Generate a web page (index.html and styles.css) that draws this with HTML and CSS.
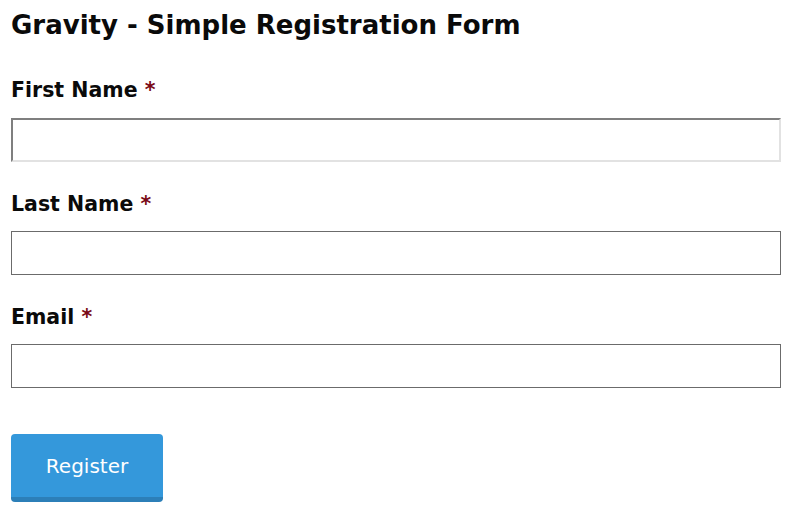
FILE: index.html
```html
<!DOCTYPE html>
<html lang="en">
<head>
<meta charset="utf-8">
<title>Gravity - Simple Registration Form</title>
<link rel="stylesheet" href="styles.css">
</head>
<body>
<main class="page">
  <h1 class="title">Gravity - Simple Registration Form</h1>
  <form class="form">
    <div class="field">
      <label class="label" for="first">First Name <span class="req">*</span></label>
      <input class="input input-inset" id="first" type="text">
    </div>
    <div class="field">
      <label class="label" for="last">Last Name <span class="req">*</span></label>
      <input class="input" id="last" type="text">
    </div>
    <div class="field field-last">
      <label class="label" for="email">Email <span class="req">*</span></label>
      <input class="input" id="email" type="text">
    </div>
    <div class="actions">
      <button class="button" type="button">Register</button>
    </div>
  </form>
</main>
</body>
</html>
```
FILE: styles.css
```css
html, body {
  margin: 0;
  padding: 0;
  background: #ffffff;
}
.page {
  padding: 9px 12px 0 11px;
  font-family: "DejaVu Sans", Verdana, sans-serif;
  color: #0a0a0a;
}
.title {
  margin: 0;
  font-size: 26px;
  line-height: 32px;
  font-weight: bold;
  color: #0a0a0a;
}
.form {
  display: flex;
  flex-direction: column;
  margin-top: 37px;
}
.field {
  display: flex;
  flex-direction: column;
  margin-bottom: 30px;
}
.field-last {
  margin-bottom: 46px;
}
.label {
  font-size: 20.5px;
  line-height: 24px;
  font-weight: bold;
  margin-bottom: 15px;
}
.req {
  color: #7a0a16;
}
.input {
  box-sizing: border-box;
  width: 100%;
  height: 44px;
  margin: 0;
  border: 1px solid #6b6b6b;
  background: #ffffff;
  padding: 0 8px;
  font-family: inherit;
  font-size: 16px;
}
.input-inset {
  border: 2px solid;
  border-color: #7f7f7f #e2e2e2 #e2e2e2 #7f7f7f;
  margin-top: 1px;
}
.actions {
  display: flex;
}
.button {
  box-sizing: border-box;
  width: 152px;
  height: 68px;
  padding: 0;
  border: none;
  border-bottom: 5px solid #2c7fb8;
  border-radius: 4px;
  background: #3498db;
  color: #ffffff;
  font-family: "DejaVu Sans", Verdana, sans-serif;
  font-size: 20px;
  line-height: 24px;
}
```
